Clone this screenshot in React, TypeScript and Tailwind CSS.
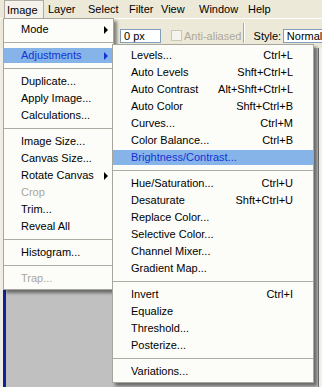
import React from 'react';

type Item =
  | { sep: true }
  | { label: string; shortcut?: string; sub?: boolean; active?: boolean; disabled?: boolean };

const imageMenu: Item[] = [
  { label: 'Mode', sub: true },
  { sep: true },
  { label: 'Adjustments', sub: true, active: true },
  { sep: true },
  { label: 'Duplicate...' },
  { label: 'Apply Image...' },
  { label: 'Calculations...' },
  { sep: true },
  { label: 'Image Size...' },
  { label: 'Canvas Size...' },
  { label: 'Rotate Canvas', sub: true },
  { label: 'Crop', disabled: true },
  { label: 'Trim...' },
  { label: 'Reveal All' },
  { sep: true },
  { label: 'Histogram...' },
  { sep: true },
  { label: 'Trap...', disabled: true },
];

const adjustMenu: Item[] = [
  { label: 'Levels...', shortcut: 'Ctrl+L' },
  { label: 'Auto Levels', shortcut: 'Shft+Ctrl+L' },
  { label: 'Auto Contrast', shortcut: 'Alt+Shft+Ctrl+L' },
  { label: 'Auto Color', shortcut: 'Shft+Ctrl+B' },
  { label: 'Curves...', shortcut: 'Ctrl+M' },
  { label: 'Color Balance...', shortcut: 'Ctrl+B' },
  { label: 'Brightness/Contrast...', active: true },
  { sep: true },
  { label: 'Hue/Saturation...', shortcut: 'Ctrl+U' },
  { label: 'Desaturate', shortcut: 'Shft+Ctrl+U' },
  { label: 'Replace Color...' },
  { label: 'Selective Color...' },
  { label: 'Channel Mixer...' },
  { label: 'Gradient Map...' },
  { sep: true },
  { label: 'Invert', shortcut: 'Ctrl+I' },
  { label: 'Equalize' },
  { label: 'Threshold...' },
  { label: 'Posterize...' },
  { sep: true },
  { label: 'Variations...' },
];

const menuBar = [
  { label: 'Image', w: 'w-[40px]', open: true },
  { label: 'Layer', w: 'w-[40px]' },
  { label: 'Select', w: 'w-[41px]' },
  { label: 'Filter', w: 'w-[32px]' },
  { label: 'View', w: 'w-[38px]' },
  { label: 'Window', w: 'w-[49px]' },
  { label: 'Help', w: 'w-[36px]' },
];

// little black triangle for submenus
const Arrow = ({ active }: { active?: boolean }) => (
  <span
    className={`block w-0 h-0 border-y-[4px] border-y-transparent border-l-[4px] ${
      active ? 'border-l-[#1533d6]' : 'border-l-black'
    }`}
  />
);

const Menu = ({ items, className, pl, pr }: { items: Item[]; className: string; pl: string; pr: string }) => (
  <div
    className={`absolute bg-[#fcfcf9] border border-[#a7a59c] py-[2px] shadow-[3px_3px_3px_rgba(0,0,0,0.45)] ${className}`}
  >
    {items.map((item, i) =>
      'sep' in item ? (
        <div key={i} className="h-[9px] flex items-center">
          <div className="h-px w-full bg-[#aeaca2]" />
        </div>
      ) : (
        <div key={i} className="h-[17px] py-px">
          <div
            className={`h-[15px] flex items-center justify-between ${pl} ${pr} ${
              item.active ? 'bg-[#86b4e9] text-[#1533d6]' : item.disabled ? 'text-[#aaa79c]' : 'text-black'
            }`}
          >
            <span className="whitespace-nowrap">{item.label}</span>
            {item.shortcut && <span className="whitespace-nowrap">{item.shortcut}</span>}
            {item.sub && <Arrow active={item.active} />}
          </div>
        </div>
      )
    )}
  </div>
);

export default function App() {
  return (
    <div
      className="relative w-[322px] h-[387px] overflow-hidden bg-[#c0c0c0] text-[11px] leading-[15px]"
      style={{ fontFamily: '"Liberation Sans", Arial, sans-serif' }}
    >
      {/* Menu bar */}
      <div className="h-[18px] bg-[#ece9d8] flex pl-[4px]">
        {menuBar.map((m) => (
          <div
            key={m.label}
            className={`${m.w} h-[18px] leading-[18px] ${
              m.open ? 'pl-[2px] border border-b-0 border-[#aeaca2] bg-[#f4f2ea]' : 'pl-[4px]'
            }`}
          >
            {m.label}
          </div>
        ))}
      </div>

      {/* Options toolbar */}
      <div className="h-[30px] bg-[#ece9d8] border-t border-t-white flex items-start pt-[10px]">
        <div className="w-[123px]" />
        <div className="w-[42px] h-[14px] border border-[#7f9db9] bg-white pl-[3px] leading-[12px]">0 px</div>
        <div className="ml-[10px] mt-[1px] w-[11px] h-[11px] border border-[#c9c7ba] bg-[#f4f3ee]" />
        <div className="ml-[2px] w-[60px] overflow-hidden whitespace-nowrap text-[#aca899] leading-[14px]">
          Anti-aliased
        </div>
        <div className="-mt-[6px] w-[2px] h-[20px] border-l border-l-[#aca899] border-r border-r-white" />
        <div className="ml-[9px] w-[30px] leading-[14px]">Style:</div>
        <div className="w-[40px] h-[14px] border border-r-0 border-[#7f9db9] bg-white pl-[3px] leading-[12px] overflow-hidden whitespace-nowrap">
          Normal
        </div>
      </div>

      {/* Workspace */}
      <div className="h-[339px] flex">
        <div className="w-[3px] bg-[#efede5]" />
        <div className="w-[3px] bg-[#0b2694]" />
        <div className="flex-1 bg-[#c0c0c0]" />
        <div className="w-[4px] bg-[#f1f0ea] border-l border-l-[#6f6f6f]" />
      </div>

      {/* Image menu */}
      <Menu items={imageMenu} className="left-[3px] top-[18px] w-[111px]" pl="pl-[17px]" pr="pr-[5px]" />

      {/* Adjustments submenu */}
      <Menu items={adjustMenu} className="left-[112px] top-[44px] w-[202px]" pl="pl-[18px]" pr="pr-[20px]" />
    </div>
  );
}
